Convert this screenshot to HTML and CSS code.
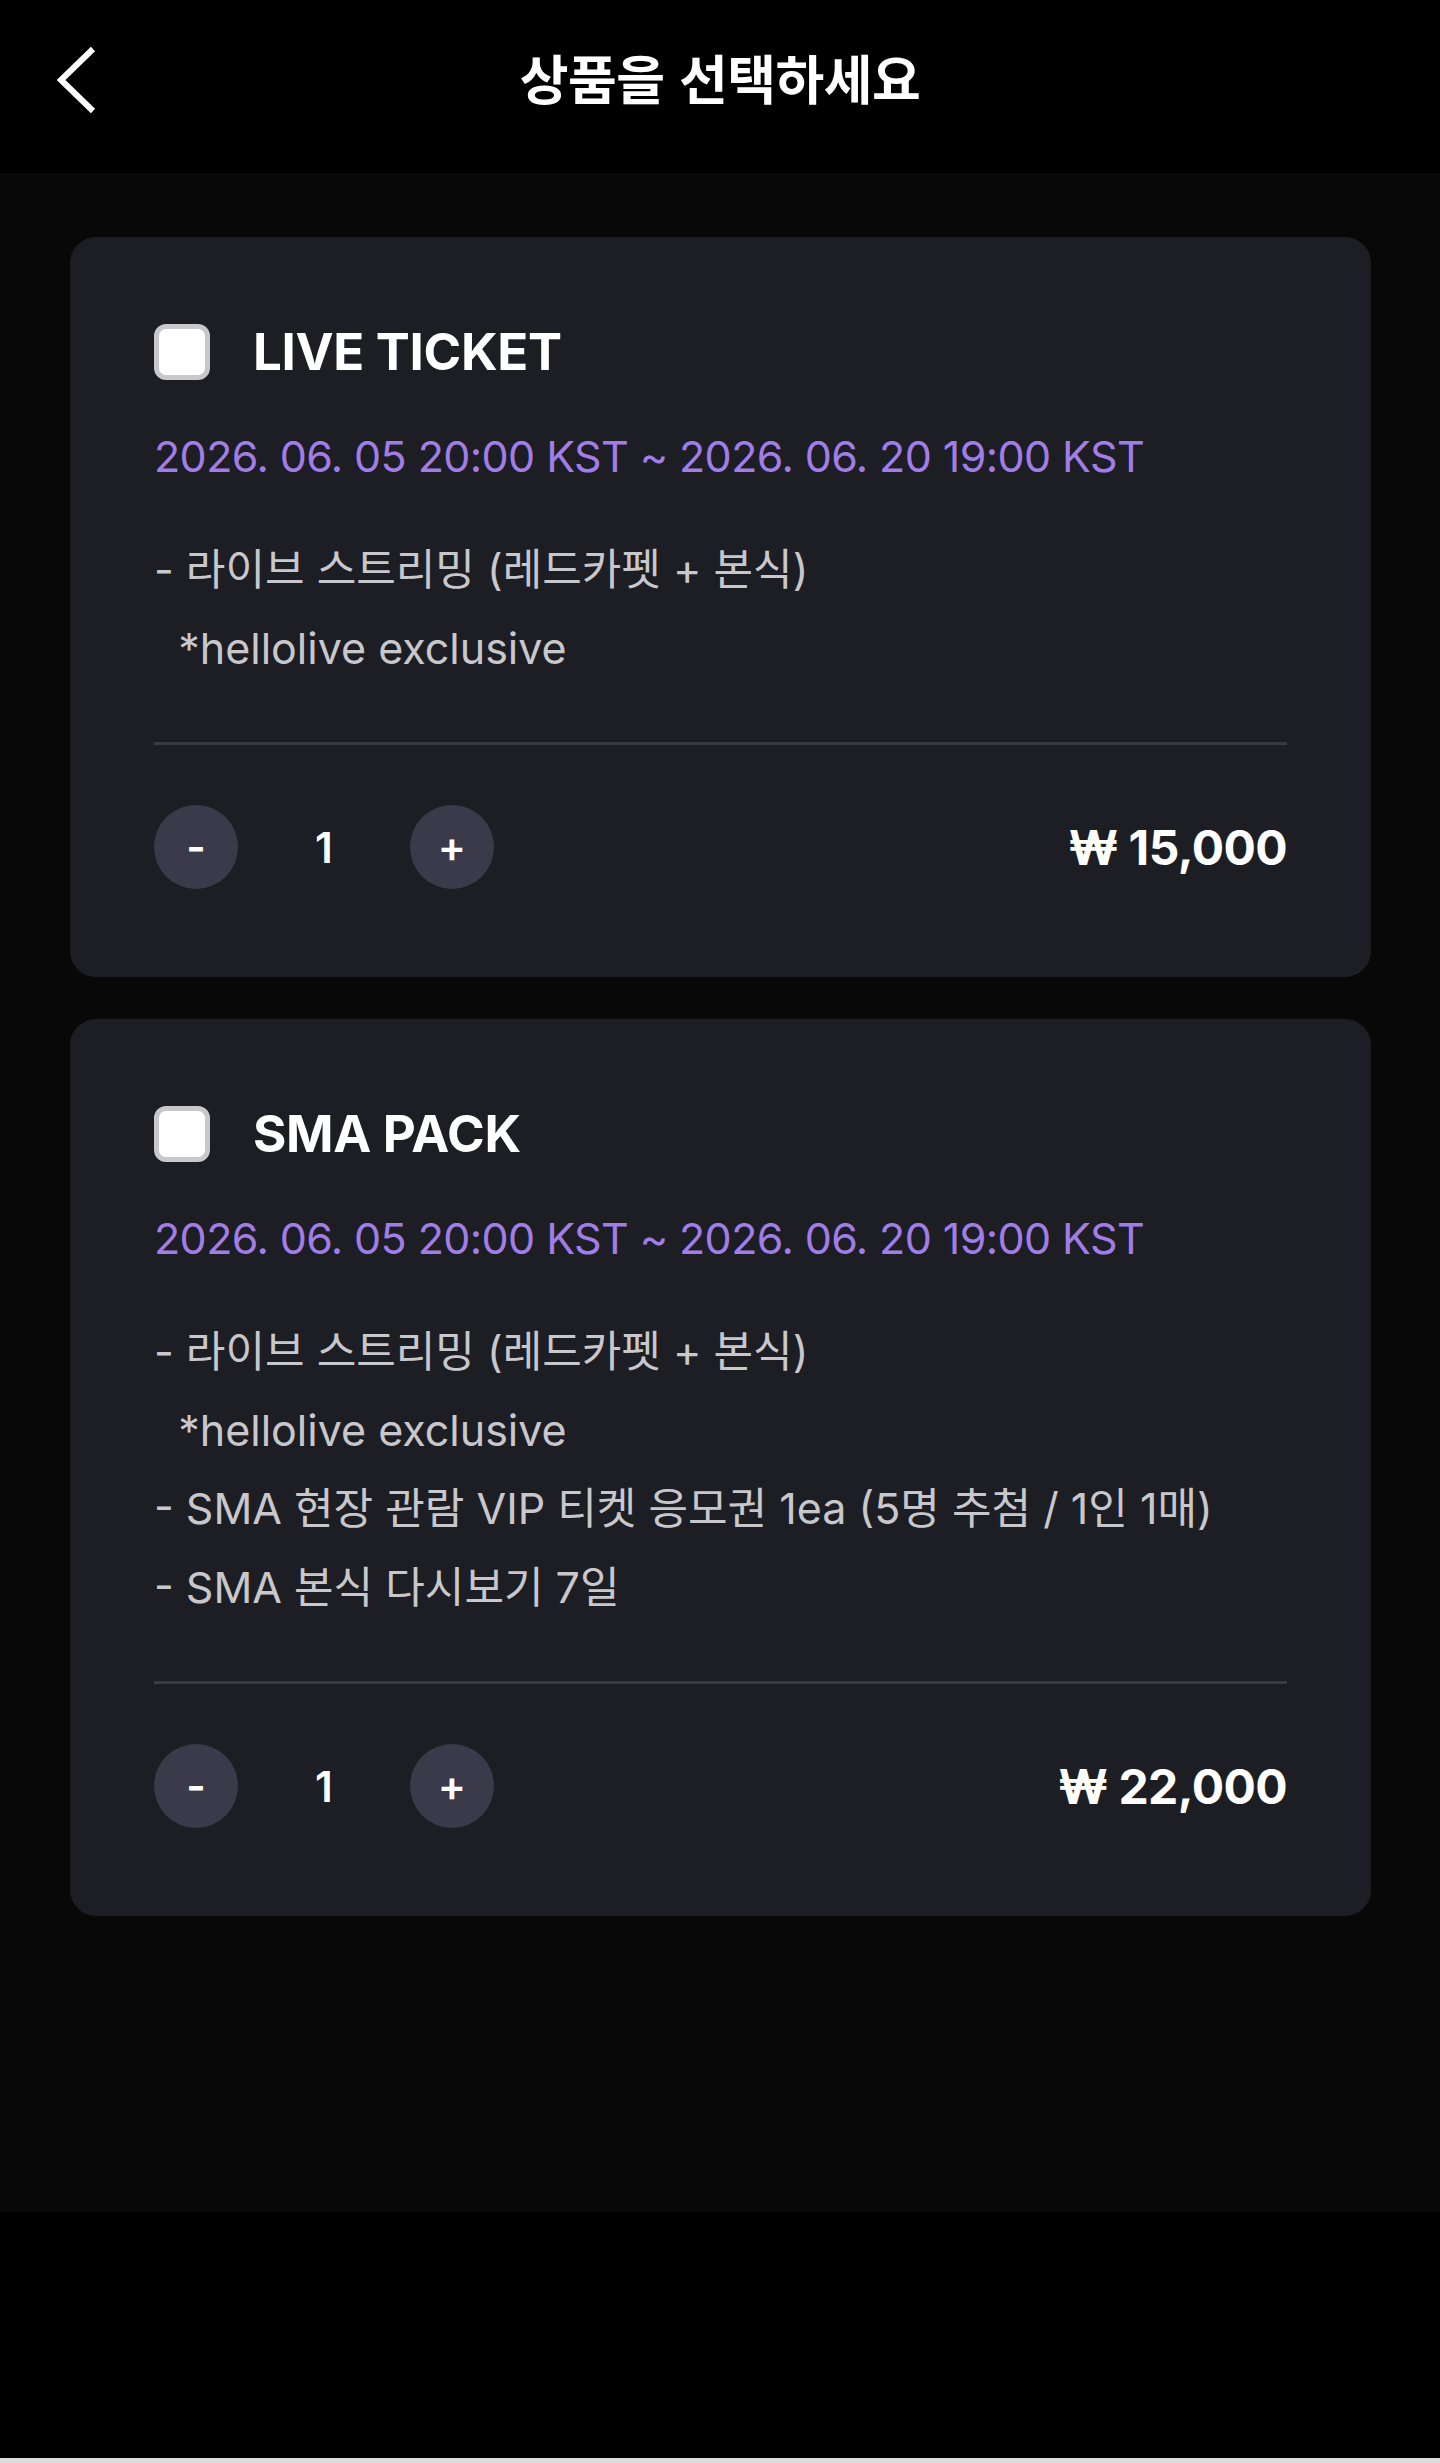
FILE: index.html
```html
<!DOCTYPE html>
<html lang="ko">
<head>
<meta charset="utf-8">
<title>상품을 선택하세요</title>
<link rel="stylesheet" href="styles.css">
</head>
<body>
<div class="app">
  <header class="topbar">
    <div class="topbar-left">
      <button class="back" aria-label="back">
        <svg width="50" height="64" viewBox="0 0 50 64"><path d="M43 4 L11 35 L43 66" fill="none" stroke="#fff" stroke-width="6"/></svg>
      </button>
    </div>
    <h1 class="topbar-title">상품을 선택하세요</h1>
    <div class="topbar-right"></div>
  </header>

  <main class="list">
    <section class="card">
      <div class="card-head">
        <span class="checkbox"></span>
        <h2 class="card-title">LIVE TICKET</h2>
      </div>
      <p class="card-date">2026. 06. 05 20:00 KST ~ 2026. 06. 20 19:00 KST</p>
      <div class="card-desc">
        <p>- 라이브 스트리밍 (레드카펫 + 본식)</p>
        <p>&nbsp;&nbsp;*hellolive exclusive</p>
      </div>
      <hr class="divider">
      <div class="card-foot">
        <div class="qty">
          <button class="qty-btn">-</button>
          <span class="qty-num">1</span>
          <button class="qty-btn">+</button>
        </div>
        <div class="price">₩ 15,000</div>
      </div>
    </section>

    <section class="card">
      <div class="card-head">
        <span class="checkbox"></span>
        <h2 class="card-title">SMA PACK</h2>
      </div>
      <p class="card-date">2026. 06. 05 20:00 KST ~ 2026. 06. 20 19:00 KST</p>
      <div class="card-desc">
        <p>- 라이브 스트리밍 (레드카펫 + 본식)</p>
        <p>&nbsp;&nbsp;*hellolive exclusive</p>
        <p>- SMA 현장 관람 VIP 티켓 응모권 1ea (5명 추첨 / 1인 1매)</p>
        <p>- SMA 본식 다시보기 7일</p>
      </div>
      <hr class="divider">
      <div class="card-foot">
        <div class="qty">
          <button class="qty-btn">-</button>
          <span class="qty-num">1</span>
          <button class="qty-btn">+</button>
        </div>
        <div class="price">₩ 22,000</div>
      </div>
    </section>
  </main>

  <div class="bottom-space"></div>
</div>
<div class="page-end"></div>
</body>
</html>
```

FILE: styles.css
```css
* { box-sizing: border-box; }

html, body {
  margin: 0;
  padding: 0;
}

body {
  background: #dcdcdc;
  font-family: "Inter", "Noto Sans CJK KR", sans-serif;
  color: #fff;
}

.app {
  background: #000;
}

.topbar {
  height: 173px;
  background: #000;
  display: grid;
  grid-template-columns: 1fr auto 1fr;
  align-items: start;
  padding-top: 45px;
}

.topbar-left {
  padding-left: 50px;
}

.back {
  display: block;
  background: none;
  border: 0;
  padding: 0;
  margin: 0;
  height: 64px;
  width: 50px;
  cursor: pointer;
}

.back svg { display: block; overflow: visible; }

.topbar-title {
  margin: 0;
  font-family: "Noto Sans CJK KR", sans-serif;
  font-weight: 700;
  font-size: 53px;
  line-height: 64px;
  color: #fff;
  letter-spacing: -0.5px;
}

.list {
  background: #080808;
  min-height: 2039px;
  padding: 64px 69px 0 70px;
  display: flex;
  flex-direction: column;
  gap: 42px;
}

.card {
  background: #1d1e23;
  border-radius: 26px;
  padding: 87px 84px 88px 84px;
}

.card-head {
  display: flex;
  align-items: center;
  gap: 43px;
  height: 56px;
}

.checkbox {
  width: 56px;
  height: 56px;
  flex: none;
  background: #fff;
  border: 5px solid #c8c8cc;
  border-radius: 12px;
}

.card-title {
  margin: 0;
  font-family: "Inter", sans-serif;
  font-weight: 700;
  font-size: 51px;
  line-height: 56px;
  color: #fff;
  letter-spacing: -0.3px;
}

.card-date {
  margin: 46px 0 0;
  font-size: 43px;
  line-height: 60px;
  color: #a17de8;
  letter-spacing: -0.6px;
}

.card-desc {
  margin-top: 44px;
  color: #c8c8cc;
  font-size: 43px;
  line-height: 78.5px;
  letter-spacing: 0;
}

.card-desc p {
  margin: 0;
  white-space: pre;
}

.divider {
  margin: 55px 0 0;
  border: 0;
  height: 3px;
  background: #3a3a40;
}

.card-foot {
  margin-top: 60px;
  display: flex;
  align-items: center;
  justify-content: space-between;
  height: 84px;
}

.qty {
  display: flex;
  align-items: center;
}

.qty-btn {
  width: 84px;
  height: 84px;
  border-radius: 50%;
  border: 0;
  padding: 0;
  background: #3a3a4a;
  color: #fff;
  font-family: "Inter", sans-serif;
  font-weight: 600;
  font-size: 42px;
  line-height: 84px;
  text-align: center;
}

.qty-num {
  width: 172px;
  text-align: center;
  font-family: "Inter", sans-serif;
  font-weight: 600;
  font-size: 42px;
  color: #fff;
}

.price {
  font-family: "Inter", sans-serif;
  font-weight: 700;
  font-size: 48px;
  color: #fff;
  letter-spacing: -0.6px;
}

.bottom-space {
  height: 246px;
  background: #000;
}

.page-end {
  height: 5px;
  background: #dcdcdc;
}
```
